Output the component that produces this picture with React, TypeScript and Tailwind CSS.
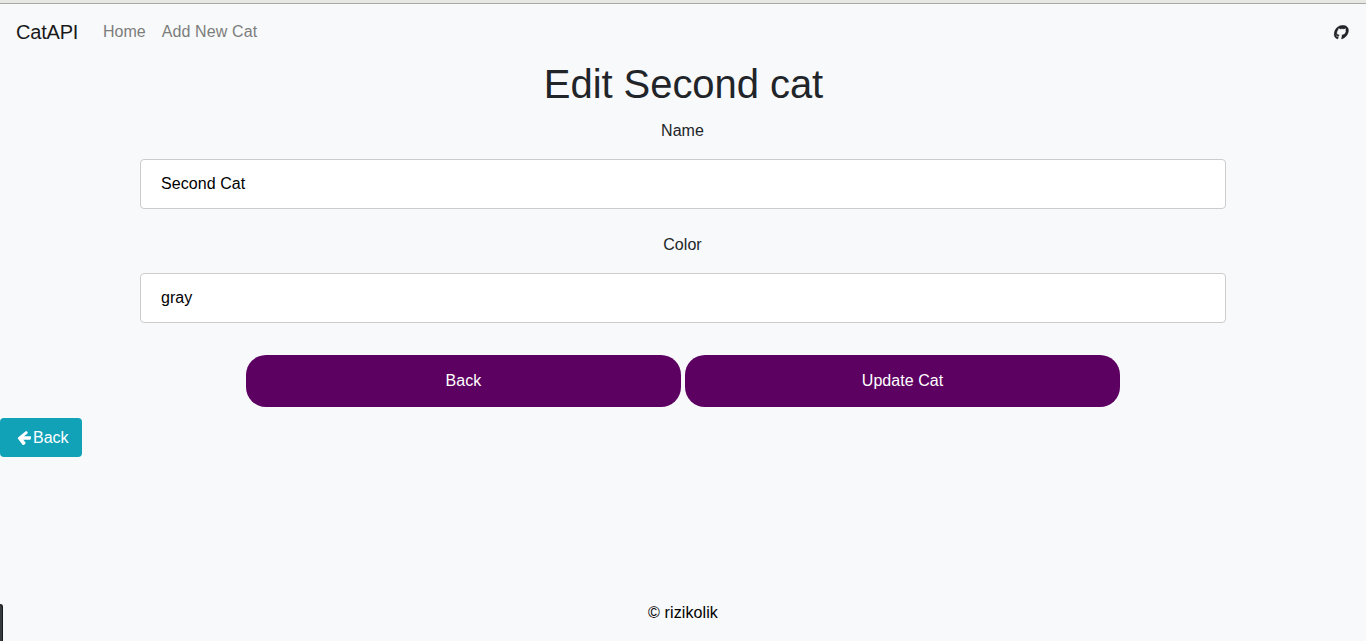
import { FaGithub } from "react-icons/fa";

function ArrowLeft() {
  return (
    <svg viewBox="0 0 1680 1792" fill="currentColor" className="mr-px h-4 w-[15px] shrink-0 -skew-x-[12deg]">
      <path
        d="M1536 896v128q0 53-32.500 90.500t-84.500 37.500h-704l293 294q38 36 38 90t-38 90l-75 76q-37 37-90 37-52 0-91-37l-651-652q-37-37-37-90 0-52 37-91l651-650q38-38 91-38 52 0 90 38l75 74q38 38 38 91t-38 91l-293 293h704q52 0 84.500 37.500t32.500 90.500z"
        transform="translate(30 -64)"
      />
    </svg>
  );
}

function Field({ label, value }: { label: string; value: string }) {
  return (
    <label className="flex flex-col items-center">
      <span className="pr-px leading-6 tracking-[0.05px]">{label}</span>
      <input
        defaultValue={value}
        className="mt-4 h-[50px] w-full rounded border border-[#ccc] bg-white px-5 tracking-[0.06px] text-black outline-none"
      />
    </label>
  );
}

function ActionButton({ children }: { children: string }) {
  return (
    <button className="h-[52px] w-[435px] rounded-[20px] bg-[#5c0061] tracking-[0.05px] text-white">
      {children}
    </button>
  );
}

export default function App() {
  return (
    <div className="flex h-[641px] flex-col overflow-hidden bg-[#f8f9fa] font-['Liberation_Sans',sans-serif] text-base text-[#212529]">
      <div className="h-1 shrink-0 border-b border-[#a9a9a6] bg-[#e7e7e4]" />
      <nav className="flex h-14 shrink-0 items-center px-4">
        <span className="w-[63px] text-xl leading-[30px] tracking-[-0.2px] text-[#1a1a1b]">CatAPI</span>
        <span className="mr-4 ml-6 text-[#7c7d7d]">Home</span>
        <span className="tracking-[0.12px] text-[#7c7d7d]">Add New Cat</span>
        <FaGithub className="mr-[1.5px] ml-auto size-[14.5px] -skew-x-[14deg] stroke-current stroke-[12]" />
      </nav>
      <main className="flex flex-col">
        <h1 className="h-12 pl-px text-center text-[40px] leading-[48px] tracking-[-0.06px]">Edit Second cat</h1>
        <form className="mx-[140px] mt-[11px] flex flex-col gap-6">
          <Field label="Name" value="Second Cat" />
          <Field label="Color" value="gray" />
        </form>
        <div className="mt-8 flex justify-center gap-1">
          <ActionButton>Back</ActionButton>
          <ActionButton>Update Cat</ActionButton>
        </div>
        <button className="mt-[11px] flex h-[39px] w-[82px] items-center rounded bg-[#11a2b8] pl-[17px] text-white">
          <ArrowLeft />
          Back
        </button>
      </main>
      <footer className="flex flex-1 items-end">
        <div className="h-[37px] w-[3px] rounded-tr border-t border-r border-[#171b1c] bg-[#363c3e]" />
        <p className="flex-1 pr-[3px] pb-4 text-center tracking-[0.1px] text-black">© rizikolik</p>
      </footer>
    </div>
  );
}
